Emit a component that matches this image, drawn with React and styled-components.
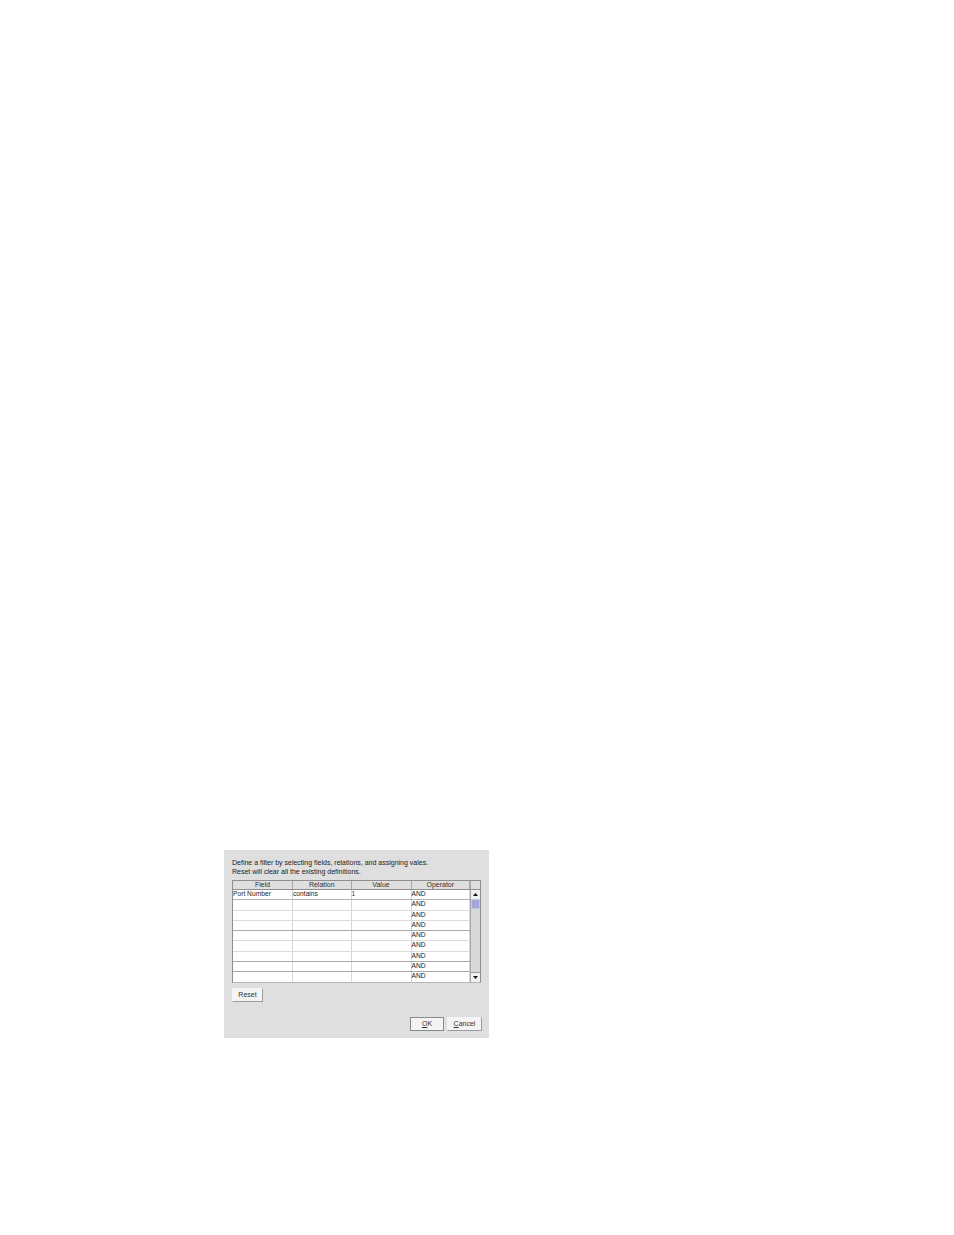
import styled, { createGlobalStyle } from "styled-components";

const GlobalStyle = createGlobalStyle`
  html, body {
    margin: 0;
    background: #fff;
  }
`;

const columns = ["Field", "Relation", "Value", "Operator"];
const rowLines = ["#dcdcdc", "#dcdcdc", "#a8a8a8", "#dcdcdc", "#dcdcdc", "#a8a8a8", "#a8a8a8", "#dcdcdc"];

const FilterDialog = () => {
  return (
    <Page>
      <GlobalStyle />
      <Dialog>
        <Intro>
          <p>Define a filter by selecting fields, relations, and assigning vales.</p>
          <p>Reset will clear all the existing definitions.</p>
        </Intro>
        <TableFrame>
          <TableArea>
            <HeaderRow>
              {columns.map((name) => (
                <HeaderCell key={name}>{name}</HeaderCell>
              ))}
            </HeaderRow>
            <Row $line="#b4b4b4">
              <Cell>Port Number</Cell>
              <Cell>contains</Cell>
              <Cell $value>1</Cell>
              <Cell>AND</Cell>
            </Row>
            {rowLines.map((line, index) => (
              <Row key={index} $line={line}>
                <Cell />
                <Cell />
                <Cell />
                <Cell>AND</Cell>
              </Row>
            ))}
            <PartialRow>
              <Cell />
              <Cell />
              <Cell />
              <Cell />
            </PartialRow>
          </TableArea>
          <Scrollbar>
            <HeaderStub />
            <ArrowButton>
              <svg width="5" height="3" viewBox="0 0 5 3">
                <path d="M2.5 0L5 3H0z" fill="#111" />
              </svg>
            </ArrowButton>
            <Track>
              <Thumb />
            </Track>
            <ArrowButton $down>
              <svg width="5" height="3" viewBox="0 0 5 3">
                <path d="M0 0h5L2.5 3z" fill="#111" />
              </svg>
            </ArrowButton>
          </Scrollbar>
        </TableFrame>
        <ResetRow>
          <Button $width={31}>Reset</Button>
        </ResetRow>
        <Footer>
          <Button $width={34} $primary>
            <u>O</u>K
          </Button>
          <Button $width={35}>
            <u>C</u>ancel
          </Button>
        </Footer>
      </Dialog>
    </Page>
  );
};

const Page = styled.div`
  width: 954px;
  height: 1235px;
  padding: 850px 0 0 224px;
  box-sizing: border-box;
  background: #fff;
  font-family: "Liberation Sans", Arial, sans-serif;
`;

const Dialog = styled.div`
  width: 265px;
  height: 188px;
  box-sizing: border-box;
  padding: 8px 8px 0;
  background: #dfdfdf;
  display: flex;
  flex-flow: column;
`;

const Intro = styled.div`
  height: 22px;
  font-size: 7px;
  line-height: 9px;
  color: #222;
  p {
    margin: 0;
    white-space: nowrap;
  }
`;

const TableFrame = styled.div`
  width: 249px;
  height: 103px;
  box-sizing: border-box;
  display: flex;
  border: 1px solid #8f8f8f;
  border-bottom-color: #b5b5b5;
  background: #fff;
`;

const TableArea = styled.div`
  width: 237px;
  height: 100%;
  overflow: hidden;
  flex: none;
`;

const HeaderRow = styled.div`
  height: 8px;
  display: grid;
  grid-template-columns: 60px 58.5px 60px 58.5px;
  background: #dfdfdf;
  border-bottom: 1px solid #8f8f8f;
`;

const HeaderCell = styled.div`
  font-size: 7px;
  line-height: 7px;
  text-align: center;
  color: #333;
  border-right: 1px solid #a8a8a8;
  box-sizing: border-box;
`;

const Row = styled.div`
  height: 9.3px;
  display: grid;
  grid-template-columns: 60px 58.5px 60px 58.5px;
  border-bottom: 1px solid ${(props) => props.$line};
`;

const PartialRow = styled(Row)`
  border-bottom: 0;
`;

const Cell = styled.div`
  font-size: 6.7px;
  line-height: 7px;
  color: ${(props) => (props.$value ? "#27408b" : "#222")};
  border-right: 1px solid #d6d6d6;
  box-sizing: border-box;
  white-space: nowrap;
`;

const Scrollbar = styled.div`
  flex: 1;
  display: flex;
  flex-flow: column;
  background: #dfdfdf;
  border-left: 1px solid #a8a8a8;
`;

const HeaderStub = styled.div`
  height: 8px;
  border-bottom: 1px solid #8f8f8f;
`;

const ArrowButton = styled.div`
  height: 9px;
  flex: none;
  display: flex;
  align-items: center;
  justify-content: center;
  background: #f1f1f1;
  ${(props) => props.$down && "border-top: 1px solid #9c9c9c;"}
`;

const Track = styled.div`
  flex: 1;
  background: #d8d8d8;
`;

const Thumb = styled.div`
  height: 10px;
  box-sizing: border-box;
  border: 1px solid #c4c4e6;
  background: #a6a6d8;
`;

const ResetRow = styled.div`
  margin-top: 5px;
  display: flex;
`;

const Button = styled.div`
  width: ${(props) => props.$width}px;
  height: 14px;
  box-sizing: border-box;
  padding-bottom: 2px;
  display: flex;
  align-items: center;
  justify-content: center;
  white-space: pre;
  font-size: 7px;
  color: #333;
  background: #f4f4f4;
  border: 1px solid transparent;
  border-right-color: #9c9c9c;
  border-bottom-color: #9c9c9c;
  ${(props) =>
    props.$primary &&
    `
    border-color: #8a8a8a;
  `}
  u {
    text-underline-offset: 1px;
  }
`;

const Footer = styled.div`
  margin-top: 15px;
  margin-right: -1px;
  display: flex;
  justify-content: flex-end;
  gap: 3px;
`;

export default FilterDialog;
